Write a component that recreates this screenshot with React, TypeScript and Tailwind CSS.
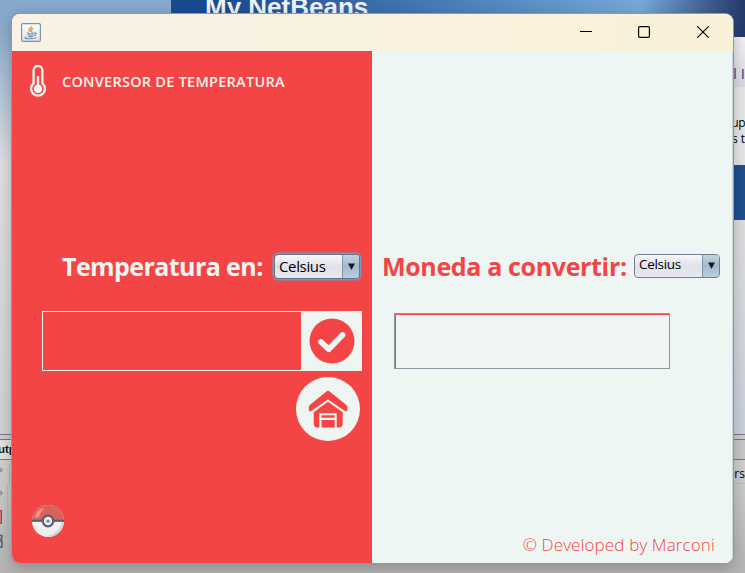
import type { ReactNode } from "react";

function JavaIcon() {
  return (
    <svg className="-mt-px" width="20" height="19" viewBox="0 0 20 19" fill="none">
      <defs>
        <linearGradient id="java-bg" x1="0" y1="0" x2="0" y2="1">
          <stop offset="0" stopColor="#ffffff" />
          <stop offset="1" stopColor="#dfe2e5" />
        </linearGradient>
      </defs>
      <rect x="0.6" y="0.6" width="18.8" height="17.8" rx="1.5" fill="url(#java-bg)" stroke="#7892a6" strokeWidth="1.2" />
      <path d="M10.3 3.2C11.2 5 7 5.6 8 7.3C8.4 8.1 9.2 8.4 9.3 9M12.3 5.3C9.6 6.2 9.7 7 10.5 7.8C11 8.4 10.6 8.8 10.2 9.1" stroke="#ee9344" strokeWidth="1.4" />
      <path d="M5.8 9.8C7.5 10.5 11.5 10.4 13 9.8M6.4 11.6C8 12.2 11 12.2 12.6 11.6M7 13.3C8.5 13.9 11 13.8 12.2 13.3M13.2 10C16 9.4 15.4 12 13.1 12.6" stroke="#7595ac" strokeWidth="1.1" />
      <path d="M5.2 14C1.8 15.2 6 15.9 9.2 15.8C12 15.7 15.2 15.2 14.8 14.2" stroke="#7595ac" strokeWidth="1.1" />
    </svg>
  );
}

function ThermometerIcon() {
  return (
    <svg className="-mt-0.5" width="16" height="32" viewBox="0 0 16 32" fill="none">
      <path d="M3.6 18.4V5.4a4.4 4.4 0 0 1 8.8 0v13a6.9 6.9 0 1 1-8.8 0Z" stroke="#eff6f2" strokeWidth="2.3" strokeLinejoin="round" />
      <circle cx="8" cy="23.9" r="4.1" fill="#eff6f2" />
      <path d="M8 11v12" stroke="#eff6f2" strokeWidth="2.4" />
    </svg>
  );
}

function CheckIcon() {
  return (
    <svg className="ml-px" width="46" height="46" viewBox="0 0 46 46" fill="none">
      <circle cx="23" cy="23" r="22.5" fill="#f34545" />
      <path d="M12 24l7.7 7.2L33.5 17" stroke="#eff6f2" strokeWidth="5.8" strokeLinecap="round" strokeLinejoin="round" />
    </svg>
  );
}

function HomeIcon() {
  return (
    <svg width="64" height="64" viewBox="0 0 64 64" fill="#f34545">
      <circle cx="32" cy="32" r="32" fill="#eff6f2" />
      <path d="M31 14q1-.8 2 0L50.4 28.1q.9.8.9 2v2.4q0 3-2.4 1.6L32 22.4 15.3 34.1q-2.4 1.4-2.4-1.6v-2.4q0-1.2.9-2Z" />
      <path d="M32 24.8 46.7 35.2V46.5q0 4-4 4H40.7V36.2H23.3v14.3h-1.8q-3.8 0-3.8-4V35.2Z" />
      <path d="M25.5 38.2h13.2v2.5H25.5zM25.5 43h13.2v7.5H25.5z" />
    </svg>
  );
}

function PokeballIcon() {
  return (
    <svg width="32" height="32" viewBox="0 0 32 32" fill="none">
      <circle cx="16" cy="16" r="16" fill="#eff1f1" />
      <path d="M0 16a16 16 0 0 1 32 0Z" fill="#d8625d" />
      <path d="M29.8 16q-1 12-17.5 15.6A16 16 0 0 0 32 16Z" fill="#d5d6db" />
      <path d="M3 12.5Q4 5 12 2.8q-3 4-5.6 9.7Z" fill="#ff8d83" />
      <path d="M0 15.8h32" stroke="#555e73" strokeWidth="2.1" />
      <circle cx="16" cy="16" r="5.3" fill="#eff3f3" stroke="#555e73" strokeWidth="2.2" />
      <circle cx="16" cy="16" r="2.8" fill="#d0d8dc" />
      <circle cx="16" cy="16" r="1" fill="#46505f" />
    </svg>
  );
}

function Combo({ focused = false }: { focused?: boolean }) {
  const frame = focused
    ? "mt-[-2px] h-[25px] w-[86px] shadow-[0_0_0_1.5px_#7398bd] border-[#63768c]"
    : "mt-[-3px] h-6 w-[86px] border-[#747d8c]";
  const label = focused ? "text-[15px] tracking-[-0.35px] pl-1" : "text-[13.5px] tracking-[-0.3px] pl-1 pb-0.5";
  return (
    <div className={`flex shrink-0 overflow-hidden rounded-[4px] border bg-linear-to-b from-[#f7f7fa] via-[#e1e2e8] to-[#e8e9ee] ${frame}`}>
      <span className={`flex flex-1 items-center leading-none text-black ${label}`}>Celsius</span>
      <span className="flex w-[17px] items-center justify-center border-l border-[#7c95ad] bg-linear-to-b from-[#c3d3e1] via-[#a4b9cd] to-[#b8cee1]">
        <svg width="7" height="7" viewBox="0 0 7 7"><path d="M0 .5h7L3.5 7Z" fill="#161b20" /></svg>
      </span>
    </div>
  );
}

function Heading({ children, className }: { children: ReactNode; className: string }) {
  return <h2 className={`-mt-0.5 whitespace-nowrap text-[25px] leading-8 font-bold ${className}`}>{children}</h2>;
}

function Desktop() {
  return (
    <div className="absolute inset-0 flex flex-col bg-[#d4d4d6] font-['Liberation_Sans',sans-serif]">
      <div className="flex h-[434px]">
        <div className="w-[171px] shrink-0 bg-linear-to-b from-[#86a9cd] from-5% via-[#e0e0e1] via-38% to-[#d0d2d6]" />
        <div className="flex min-w-0 flex-1 flex-col">
          <div className="h-[37px] bg-linear-to-r from-[#194b93] from-8% via-[#76a9d7] via-82% to-[#25396b] pl-[34px]">
            <p className="relative top-[-9px] text-[26px] leading-8 font-bold whitespace-nowrap text-[#eff2f7]">My NetBeans</p>
          </div>
          <div className="h-[50px] bg-linear-to-b from-[#f2f2f5] to-[#d8dce1] pt-7 text-right text-[15px] leading-[18px] whitespace-nowrap text-[#474e9b]">all I</div>
          <div className="h-[78px] bg-[#e8e8e9] pt-7 font-['Open_Sans',sans-serif] text-xs leading-4 text-black">
            <p className="text-right tracking-[-0.5px]">up</p><p className="text-right">s t</p>
          </div>
          <div className="h-[55px] bg-[#204e8e]" />
          <div className="flex-1 bg-linear-to-b from-[#dedfe0] to-[#cbd1dd]" />
        </div>
      </div>
      <div className="h-[6px] border-y border-[#777984] bg-[#cdcdce]" />
      <div className="flex h-[20px] items-center justify-between border-b border-[#777984] bg-[#e2e2e3]">
        <span className="-ml-[2px] text-[11.5px] font-bold text-[#17191c]">utp</span>
        <div className="h-full w-5 bg-[#c8c8c9]" />
      </div>
      <div className="flex flex-1 justify-between bg-linear-to-b from-[#d2d2d2] to-[#b4b4b4]">
        <svg width="12" height="100" viewBox="0 0 12 100" fill="none">
          <path d="M0 8l2 2-2 2M0 31l2 2-2 2" stroke="#87907e" strokeWidth="1.5" />
          <path d="M7.5 25v75M9.5 4v21" stroke="#bababa" />
          <path d="M-2 50.5h3.5v13H-2Z" fill="#d97870" stroke="#b93834" />
          <path d="M0 76q2-2 2 1t-2 2M0 81h2v6H0" stroke="#4c5966" strokeWidth="1.4" />
        </svg>
        <span className="h-6 border-b border-[#bcbcbc] pt-1.5 font-['Open_Sans',sans-serif] text-xs whitespace-nowrap text-black">ers</span>
      </div>
    </div>
  );
}

function TitleBar() {
  return (
    <header className="flex h-[37px] shrink-0 items-center justify-between bg-linear-to-r from-[#f9f1e5] to-[#f9f2d9] pr-6 pl-[9px]">
      <JavaIcon />
      <div className="-mt-px flex items-center">
        <svg className="mr-[46px]" width="12" height="12" viewBox="0 0 12 12"><path d="M0 5.5h12" stroke="#000" /></svg>
        <svg className="mr-[47px]" width="12" height="12" viewBox="0 0 12 12"><rect x=".6" y=".6" width="10.8" height="10.8" rx="1.2" fill="none" stroke="#000" strokeWidth="1.2" /></svg>
        <svg width="12" height="12" viewBox="0 0 12 12"><path d="M.3.3l11.4 11.4M11.7.3.3 11.7" stroke="#000" strokeWidth="1.1" /></svg>
      </div>
    </header>
  );
}

export default function App() {
  return (
    <main className="relative h-[573px] w-full overflow-hidden font-['Open_Sans','Noto_Sans',sans-serif]">
      <Desktop />
      <div className="absolute top-[14px] left-3 flex h-[549px] w-[721px] flex-col overflow-hidden rounded-[8px] bg-[#edf6f2] shadow-[0_0_0_1px_#92999f,0_4px_16px_#0004]">
        <TitleBar />
        <div className="flex flex-1">
          <section className="flex w-[360px] flex-col bg-[#f34545]">
            <div className="flex h-[62px] items-center pl-[18px]">
              <ThermometerIcon />
              <h1 className="ml-4 text-[14.5px] leading-5 font-semibold tracking-[0.26px] whitespace-nowrap text-[#fbf3ee]">CONVERSOR DE TEMPERATURA</h1>
            </div>
            <div className="mt-[138px] flex h-8 items-center justify-between pr-3 pl-[50px]">
              <Heading className="tracking-[-0.58px] text-[#eff6f2]">Temperatura en:</Heading>
              <Combo focused />
            </div>
            <div className="mt-[28px] ml-[30px] flex h-[60px] w-80 border border-[#eff6f2]">
              <div className="flex-1" />
              <button className="flex w-[60px] items-center justify-center bg-[#eff6f2]"><CheckIcon /></button>
            </div>
            <button className="mt-1.5 mr-3 self-end"><HomeIcon /></button>
            <div className="mt-auto mb-[26px] ml-5"><PokeballIcon /></div>
          </section>
          <section className="flex w-[361px] flex-col border-r border-[#cdd3d9] bg-[#edf6f2]">
            <div className="mt-[200px] flex h-8 items-center justify-between pr-3 pl-[10px]">
              <Heading className="tracking-[-0.35px] text-[#f34545]">Moneda a convertir:</Heading>
              <Combo />
            </div>
            <div className="mt-[30px] ml-[22px] h-14 w-[276px] border border-[#9395a3]">
              <div className="h-full border-t border-l border-[#f34545] bg-[#eff5f2]" />
            </div>
            <footer className="mt-auto mr-[17px] mb-[6px] text-right text-[17px] leading-6 font-light tracking-[0.13px] whitespace-nowrap text-[#f34545]">© Developed by Marconi</footer>
          </section>
        </div>
      </div>
    </main>
  );
}
